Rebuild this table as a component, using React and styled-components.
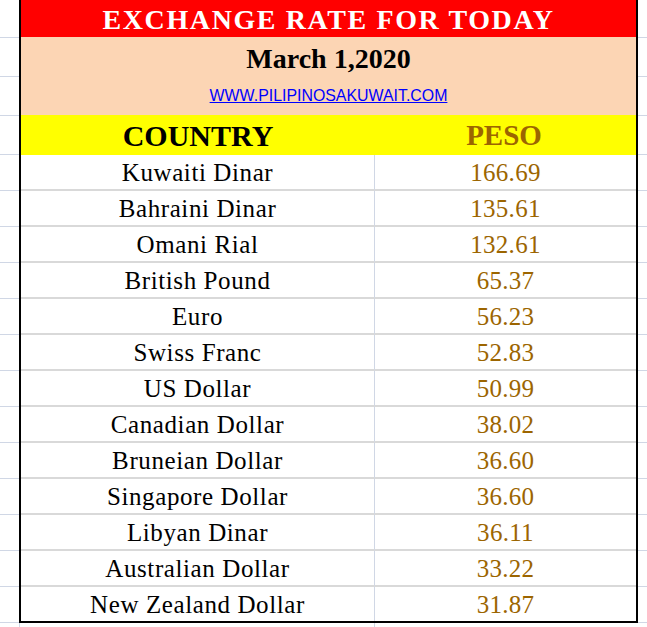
import React from 'react';
import styled, { createGlobalStyle } from 'styled-components';

const GlobalStyle = createGlobalStyle`
  html, body {
    margin: 0;
    padding: 0;
    background: #ffffff;
    overflow: hidden;
  }
  * {
    box-sizing: border-box;
  }
`;

const GRID = '#d0d7e5';
const SEP = '#d9d9d9';
const GOLD = '#9c6500';
const SERIF = '"Liberation Serif", "Times New Roman", serif';

const Sheet = styled.div`
  display: grid;
  grid-template-columns: 19px 619px 1fr;
  width: 647px;
  height: 627px;
  overflow: hidden;
`;

const Gutter = styled.div`
  display: flex;
  flex-direction: column;
`;

const GutterCell = styled.div`
  height: ${({ $h }) => $h}px;
  border-bottom: 1px solid ${GRID};
`;

const Banner = styled.div`
  display: flex;
  flex-direction: column;
  border-left: 2px solid #000;
  border-right: 2px solid #000;
`;

const Title = styled.div`
  height: 37px;
  background: #ff0000;
  color: #ffffff;
  font-family: ${SERIF};
  font-weight: 700;
  font-size: 28px;
  line-height: 37px;
  padding-top: 1px;
  letter-spacing: 1.6px;
  text-align: center;
`;

const DateBlock = styled.div`
  height: 78px;
  background: #fcd5b4;
  display: flex;
  flex-direction: column;
  align-items: center;
  padding-top: 6px;
  gap: 12px;
`;

const DateText = styled.div`
  font-family: ${SERIF};
  font-weight: 700;
  font-size: 28px;
  line-height: 32px;
  color: #000;
`;

const SiteLink = styled.a`
  font-family: "Liberation Sans", Arial, sans-serif;
  font-size: 15.9px;
  line-height: 18px;
  color: #0000ff;
  text-decoration: underline;
`;

const HeaderRow = styled.div`
  height: 40px;
  background: #ffff00;
  display: grid;
  grid-template-columns: 354px 1fr;
  padding-top: 1px;
`;

const HeadCell = styled.div`
  font-family: ${SERIF};
  font-weight: 700;
  font-size: ${({ $gold }) => ($gold ? '29px' : '30px')};
  line-height: 39px;
  text-align: center;
  color: ${({ $gold }) => ($gold ? GOLD : '#000')};
  padding-right: ${({ $gold }) => ($gold ? '3px' : '0')};
`;

const Row = styled.div`
  height: 36px;
  display: grid;
  grid-template-columns: 354px 1fr;
  border-left: 2px solid #000;
  border-right: 2px solid #000;
  border-bottom: ${({ $last }) => ($last ? '2px solid #000' : 'none')};
`;

const Cell = styled.div`
  font-family: ${SERIF};
  font-size: 25px;
  line-height: 32px;
  padding-top: 2px;
  text-align: center;
  white-space: nowrap;
  letter-spacing: ${({ $gold }) => ($gold ? '0.3px' : '0.6px')};
  color: ${({ $gold }) => ($gold ? GOLD : '#000')};
  border-right: ${({ $gold }) => ($gold ? 'none' : `1px solid ${GRID}`)};
  border-bottom: ${({ $last }) => ($last ? 'none' : `2px solid ${SEP}`)};
`;

const TailGrid = styled.div`
  height: 5px;
  display: grid;
  grid-template-columns: 1px 355px 1fr;
`;

const TailLine = styled.div`
  border-right: 1px solid ${GRID};
`;

const headerCells = [38, 39, 39, 39];

const rates = [
  ['Kuwaiti Dinar', '166.69'],
  ['Bahraini Dinar', '135.61'],
  ['Omani Rial', '132.61'],
  ['British Pound', '65.37'],
  ['Euro', '56.23'],
  ['Swiss Franc', '52.83'],
  ['US Dollar', '50.99'],
  ['Canadian Dollar', '38.02'],
  ['Bruneian Dollar', '36.60'],
  ['Singapore Dollar', '36.60'],
  ['Libyan Dinar', '36.11'],
  ['Australian Dollar', '33.22'],
  ['New Zealand Dollar', '31.87'],
];

const App = () => {
  return (
    <>
      <GlobalStyle />
      <Sheet>
        <Gutter>
          {headerCells.map((h, i) => (
            <GutterCell key={i} $h={h} />
          ))}
        </Gutter>
        <Banner>
          <Title>EXCHANGE RATE FOR TODAY</Title>
          <DateBlock>
            <DateText>March 1,2020</DateText>
            <SiteLink href="#">WWW.PILIPINOSAKUWAIT.COM</SiteLink>
          </DateBlock>
          <HeaderRow>
            <HeadCell>COUNTRY</HeadCell>
            <HeadCell $gold>PESO</HeadCell>
          </HeaderRow>
        </Banner>
        <Gutter>
          {headerCells.map((h, i) => (
            <GutterCell key={i} $h={h} />
          ))}
        </Gutter>

        {rates.map(([name, value], i) => {
          const last = i === rates.length - 1;
          return (
            <React.Fragment key={name}>
              <GutterCell $h={36} />
              <Row $last={last}>
                <Cell $last={last}>{name}</Cell>
                <Cell $gold $last={last}>{value}</Cell>
              </Row>
              <GutterCell $h={36} />
            </React.Fragment>
          );
        })}

        <div />
        <TailGrid>
          <TailLine />
          <TailLine />
          <div />
        </TailGrid>
        <div />
      </Sheet>
    </>
  );
};

export default App;
